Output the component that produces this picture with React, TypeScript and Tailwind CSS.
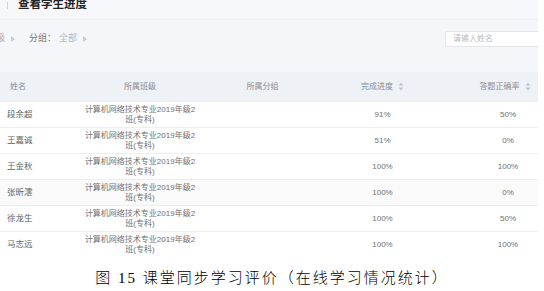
const rows = [
  { name: "段余超", progress: "91%", rate: "50%", striped: false },
  { name: "王嘉诚", progress: "51%", rate: "0%", striped: false },
  { name: "王金秋", progress: "100%", rate: "100%", striped: false },
  { name: "张昕澐", progress: "100%", rate: "0%", striped: true },
  { name: "徐龙生", progress: "100%", rate: "50%", striped: false },
  { name: "马志远", progress: "100%", rate: "100%", striped: false },
];

function SortIcon() {
  return (
    <svg width="6" height="9" viewBox="0 0 6 9" className="ml-[5px]">
      <path d="M3 0.5 L5.5 3.5 H0.5 Z" fill="#c0c4cc" />
      <path d="M3 8.5 L5.5 5.5 H0.5 Z" fill="#c0c4cc" />
    </svg>
  );
}

function Caret() {
  return (
    <svg width="4" height="6" viewBox="0 0 4 6" className="ml-[6px]">
      <path d="M0 0 L4 3 L0 6 Z" fill="#c8cbd2" />
    </svg>
  );
}

export default function App() {
  return (
    <div
      className="relative h-[291px] w-[544px] overflow-hidden bg-white"
      style={{ fontFamily: '"Liberation Sans", "Noto Sans CJK SC", sans-serif' }}
    >
      <div className="h-[257px] w-[538px] overflow-hidden bg-[#f4f6f9]">
        {/* page title */}
        <div className="flex h-[20px] items-start border-b border-[#eceef3] bg-[#f7f8fb]">
          <div className="ml-[7px] mt-[2px] h-[7px] w-px bg-[#cfd2d8]" />
          <div className="ml-[10px] mt-[-3px] text-[11.5px] font-bold leading-[14px] text-[#222]">
            查看学生进度
          </div>
        </div>

        {/* filters */}
        <div className="flex h-[38px] items-center text-[9px] text-[#777]">
          <div className="ml-[-4px] flex items-center text-[#aaa]">
            级<Caret />
          </div>
          <div className="ml-[14px] flex items-center">
            <span>分组：</span>
            <span className="ml-[3px] text-[#b5b8bf]">全部</span>
            <Caret />
          </div>
          <div className="ml-auto flex h-[16px] w-[93px] items-center rounded-l-[2px] border border-r-0 border-[#e2e4ea] bg-white pl-[7px] text-[8px] text-[#b8bbc2]">
            请输入姓名
          </div>
        </div>

        {/* table */}
        <div className="mt-[14px] bg-white">
          <div className="flex h-[30px] items-center border-b border-[#ebeef5] bg-[#eef1f6] text-[8px] text-[#8a8d94]">
            <div className="w-[60px] pl-[10px]">姓名</div>
            <div className="w-[160px] text-center">所属班级</div>
            <div className="w-[85px] text-center">所属分组</div>
            <div className="flex w-[155px] items-center justify-center">
              完成进度<SortIcon />
            </div>
            <div className="flex w-[78px] items-center justify-center pl-[12px]">
              答题正确率<SortIcon />
            </div>
          </div>
          {rows.map((r) => (
            <div
              key={r.name}
              className={`flex h-[26px] items-center border-b border-[#ebeef5] text-[8px] text-[#707070] ${
                r.striped ? "bg-[#fafafa]" : "bg-white"
              }`}
            >
              <div className="w-[60px] pl-[7px] text-[8.5px] text-[#5f5f5f]">{r.name}</div>
              <div className="w-[160px] text-center leading-[10px]">
                计算机网络技术专业2019年级2
                <br />
                班(专科)
              </div>
              <div className="w-[85px]" />
              <div className="w-[155px] text-center">{r.progress}</div>
              <div className="w-[78px] pl-[18px] text-center">{r.rate}</div>
            </div>
          ))}
        </div>
      </div>

      {/* caption */}
      <div
        className="mt-[12px] text-center text-[15px] font-light leading-[18px] tracking-[2px] text-black"
        style={{ fontFamily: '"Liberation Serif", "Noto Sans CJK SC", serif' }}
      >
        图 15 课堂同步学习评价（在线学习情况统计）
      </div>
    </div>
  );
}
